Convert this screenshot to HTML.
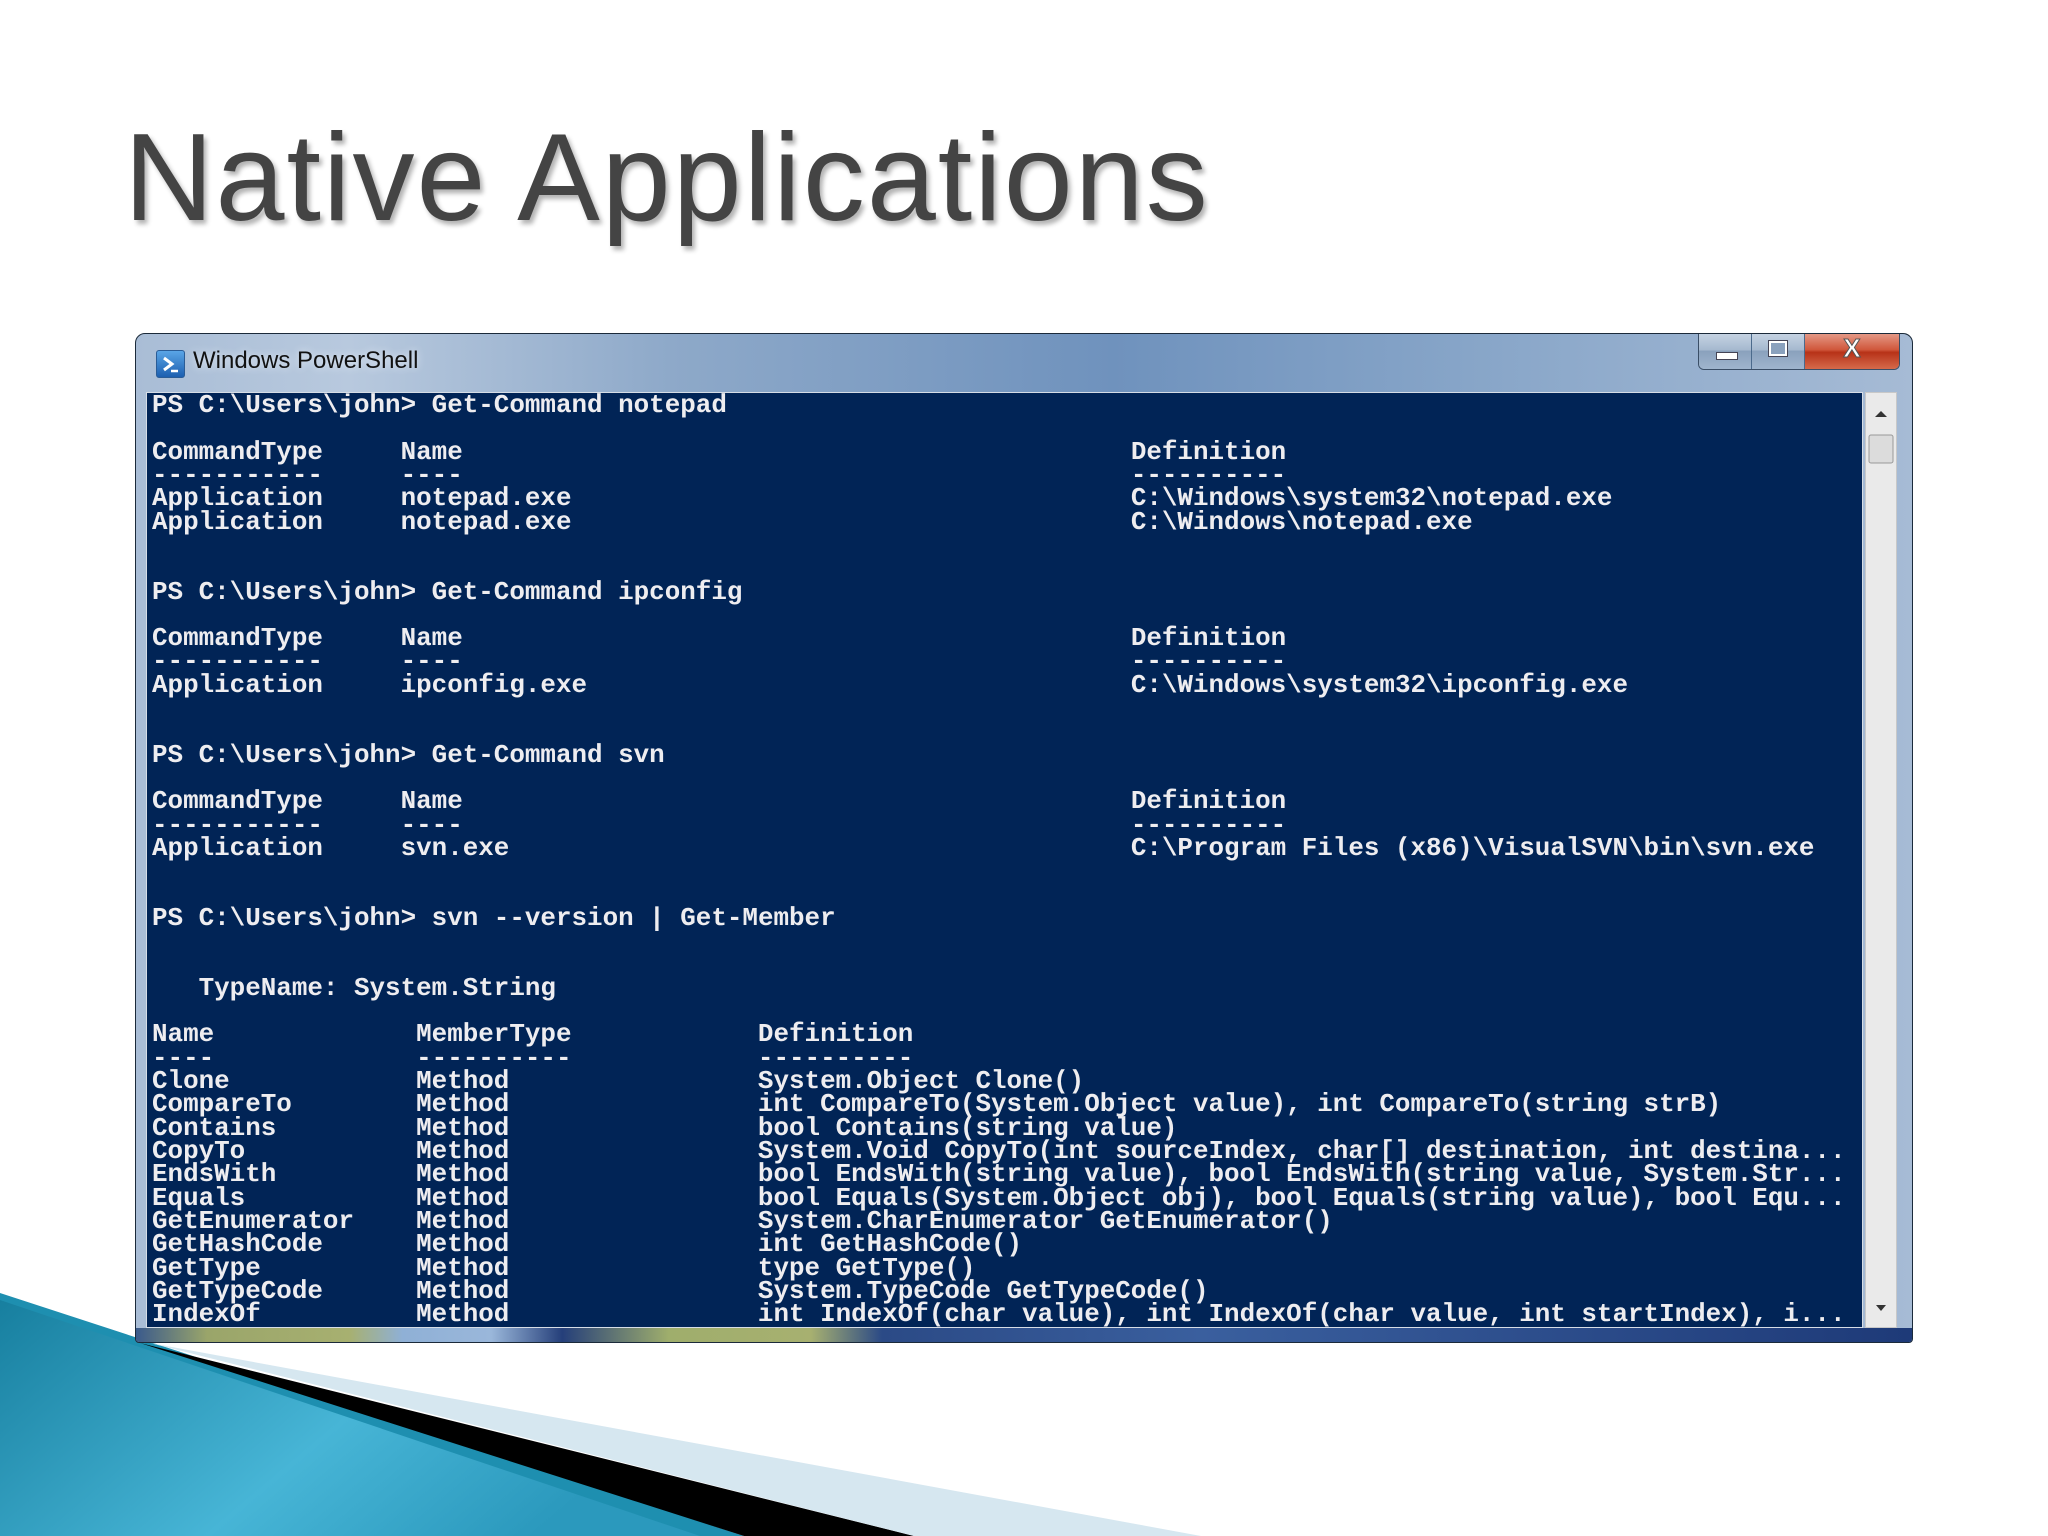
<!DOCTYPE html>
<html><head><meta charset="utf-8"><style>
html,body{margin:0;padding:0;width:2048px;height:1536px;overflow:hidden;background:#fff;position:relative}
.title{position:absolute;left:124px;top:116px;font:124px/1 "Liberation Sans",sans-serif;letter-spacing:2px;color:#444;text-shadow:3px 4px 5px rgba(0,0,0,.3);white-space:nowrap}
svg.deco{position:absolute;left:0;top:0}
.win{position:absolute;left:135px;top:333px;width:1778px;height:1010px;border:1px solid #1b2a3a;border-radius:10px 10px 4px 4px;box-sizing:border-box;
background:linear-gradient(90deg,#a9bdd6 0%,#b8c9de 12%,#8ea9c9 30%,#6f92bd 55%,#87a5c8 75%,#a6bbd5 100%);overflow:hidden}
.tt{position:absolute;left:57px;top:15px;font:24px/1 "Liberation Sans",sans-serif;color:#111;text-shadow:0 0 8px #e8eef6}
.ico{position:absolute;left:20px;top:16px;width:27px;height:26px;border-radius:3px;background:linear-gradient(#5aa5e6,#1c5fb0);border:1px solid #2a5c96}
.btns{position:absolute;left:1562px;top:-2px;width:200px;height:37px;border:1px solid #3a4e66;border-top:none;border-radius:0 0 6px 6px;overflow:hidden;display:flex}
.b{height:100%;border-right:1px solid #4b6a8c;background:linear-gradient(#c9d6e5 0%,#a6b9cf 48%,#8aa1bd 52%,#9fb5cd 100%);position:relative}
.cl{background:linear-gradient(#e7a08f 0%,#d0573b 48%,#b73218 55%,#d66a4b 100%);border-right:none}
.term{position:absolute;left:10px;top:58px;width:1717px;height:936px;background:#012456;border:1px solid #d6dde6;box-sizing:border-box;overflow:hidden}
.sb{position:absolute;left:1729px;top:58px;width:32px;height:936px;background:#eaeaea;border:1px solid #c8c8c8;box-sizing:border-box}
.bot{position:absolute;left:0;top:994px;width:100%;height:16px;background:linear-gradient(90deg,#3a5a8c 0%,#9aa56a 4%,#a7b070 12%,#8fb0d6 15%,#9ab7da 20%,#253f7a 24%,#9fae6c 30%,#a7b070 38%,#2b4a86 42%,#3a5f9e 60%,#1e3a78 100%)}
pre{margin:0;position:absolute;left:5px;top:1px;font:bold 25.9px/23.31px "Liberation Mono",monospace;color:#eeedf0}
i{font-style:normal;display:inline-block}
.a{width:16ch}.n{width:47ch}.m{width:17ch}.t{width:22ch}
</style></head><body>
<svg class="deco" width="2048" height="1536">
<defs><linearGradient id="g" x1="0" y1="0" x2="1" y2="0.4"><stop offset="0" stop-color="#177f9f"/><stop offset="0.6" stop-color="#47b5d6"/><stop offset="1" stop-color="#2b99bd"/></linearGradient></defs>
<polygon points="0,1293 744,1536 0,1536" fill="#1e8fb0"/>
<polygon points="0,1300 700,1536 0,1536" fill="url(#g)"/>
<polygon points="140,1343 914,1536 744,1536" fill="#000"/>
<polygon points="150,1343 1201,1536 914,1536" fill="#d6e7f0"/>
</svg>
<div class="title">Native Applications</div>
<div class="win">
<div class="ico"><svg width="27" height="26"><path d="M7 7 L15 13 L7 19" stroke="#fff" stroke-width="3" fill="none"/><path d="M14 20 H21" stroke="#fff" stroke-width="2.5"/></svg></div>
<div class="tt">Windows PowerShell</div>
<div class="btns"><div class="b" style="width:53px"><div style="position:absolute;left:17px;top:20px;width:20px;height:6px;background:#fff;border:1px solid #445"></div></div><div class="b" style="width:52px"><div style="position:absolute;left:17px;top:9px;width:14px;height:11px;border:2px solid #fff;outline:1px solid #445;background:#8aa1bd"></div></div><div class="b cl" style="width:95px"><div style="position:absolute;left:0;right:0;top:3px;text-align:center;font:bold 26px/1 'Liberation Sans',sans-serif;color:#fff;-webkit-text-stroke:1px #555">X</div></div></div>
<div class="term"><pre>PS C:\Users\john&gt; Get-Command notepad

<i class="a">CommandType</i><i class="n">Name</i>Definition
<i class="a">-----------</i><i class="n">----</i>----------
<i class="a">Application</i><i class="n">notepad.exe</i>C:\Windows\system32\notepad.exe
<i class="a">Application</i><i class="n">notepad.exe</i>C:\Windows\notepad.exe


PS C:\Users\john&gt; Get-Command ipconfig

<i class="a">CommandType</i><i class="n">Name</i>Definition
<i class="a">-----------</i><i class="n">----</i>----------
<i class="a">Application</i><i class="n">ipconfig.exe</i>C:\Windows\system32\ipconfig.exe


PS C:\Users\john&gt; Get-Command svn

<i class="a">CommandType</i><i class="n">Name</i>Definition
<i class="a">-----------</i><i class="n">----</i>----------
<i class="a">Application</i><i class="n">svn.exe</i>C:\Program Files (x86)\VisualSVN\bin\svn.exe


PS C:\Users\john&gt; svn --version | Get-Member


   TypeName: System.String

<i class="m">Name</i><i class="t">MemberType</i>Definition
<i class="m">----</i><i class="t">----------</i>----------
<i class="m">Clone</i><i class="t">Method</i>System.Object Clone()
<i class="m">CompareTo</i><i class="t">Method</i>int CompareTo(System.Object value), int CompareTo(string strB)
<i class="m">Contains</i><i class="t">Method</i>bool Contains(string value)
<i class="m">CopyTo</i><i class="t">Method</i>System.Void CopyTo(int sourceIndex, char[] destination, int destina...
<i class="m">EndsWith</i><i class="t">Method</i>bool EndsWith(string value), bool EndsWith(string value, System.Str...
<i class="m">Equals</i><i class="t">Method</i>bool Equals(System.Object obj), bool Equals(string value), bool Equ...
<i class="m">GetEnumerator</i><i class="t">Method</i>System.CharEnumerator GetEnumerator()
<i class="m">GetHashCode</i><i class="t">Method</i>int GetHashCode()
<i class="m">GetType</i><i class="t">Method</i>type GetType()
<i class="m">GetTypeCode</i><i class="t">Method</i>System.TypeCode GetTypeCode()
<i class="m">IndexOf</i><i class="t">Method</i>int IndexOf(char value), int IndexOf(char value, int startIndex), i...</pre></div>
<div class="sb"><svg width="30" height="934"><path d="M9 24 L15 18 L21 24Z" fill="#333"/><rect x="3" y="42" width="24" height="28" rx="2" fill="#dcdcdc" stroke="#999"/><path d="M10 912 L15 918 L20 912Z" fill="#333"/></svg></div>
<div class="bot"></div>
</div>
</body></html>
